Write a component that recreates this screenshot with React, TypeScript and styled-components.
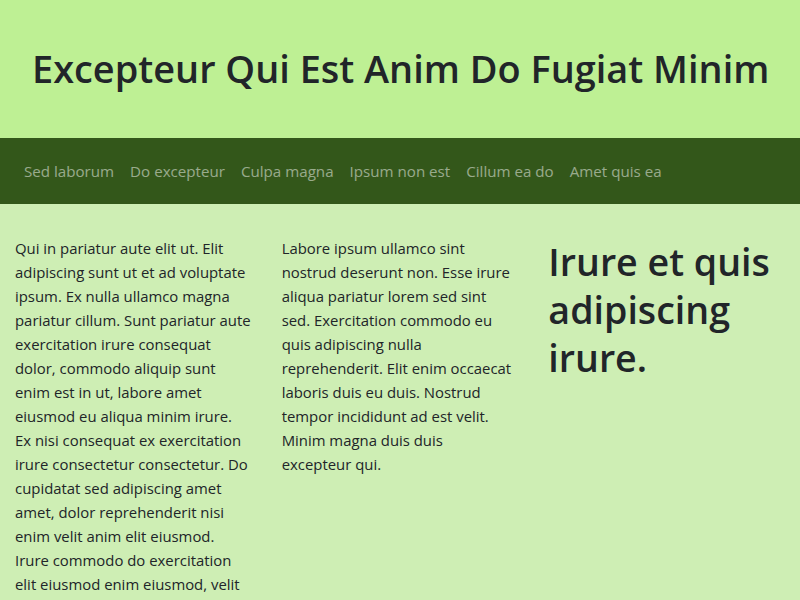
import React from "react";
import styled, { createGlobalStyle } from "styled-components";

const GlobalStyle = createGlobalStyle`
  html, body { margin: 0; padding: 0; }
  body {
    background: #ceeeb4;
    font-family: "Open Sans", "Noto Sans", sans-serif;
    color: #212529;
  }
`;

const Page = styled.div`
  width: 800px;
  min-height: 600px;
  background: #ceeeb4;
`;

const Header = styled.header`
  background: #bef094;
  padding: 44px 32px 46px;
`;

const Title = styled.h1`
  margin: 0;
  font-size: 37.9px;
  line-height: 48px;
  font-weight: 600;
  color: #212529;
  white-space: nowrap;
`;

const Nav = styled.nav`
  background: #33571a;
  display: flex;
  padding: 0 16px;
`;

const NavLink = styled.a`
  display: block;
  padding: 21px 8px;
  font-size: 15.15px;
  line-height: 24px;
  color: rgba(255, 255, 255, 0.5);
  text-decoration: none;
`;

const Main = styled.main`
  display: grid;
  grid-template-columns: repeat(3, 1fr);
  padding-top: 32px;
`;

const Column = styled.section<{ $narrow?: boolean }>`
  padding: 0 ${(p) => (p.$narrow ? "17.5px" : "15px")} 0 15px;
`;

const Text = styled.p`
  margin: 0;
  font-size: 14.9px;
  line-height: 24px;
`;

const Heading = styled.h2`
  margin: 2px 0 0;
  font-size: 37.6px;
  line-height: 48px;
  font-weight: 600;
`;

const links = [
  "Sed laborum",
  "Do excepteur",
  "Culpa magna",
  "Ipsum non est",
  "Cillum ea do",
  "Amet quis ea",
];

export default function App() {
  return (
    <Page>
      <GlobalStyle />
      <Header>
        <Title>Excepteur Qui Est Anim Do Fugiat Minim</Title>
      </Header>
      <Nav>
        {links.map((l) => (
          <NavLink key={l} href="#">
            {l}
          </NavLink>
        ))}
      </Nav>
      <Main>
        <Column>
          <Text>
            Qui in pariatur aute elit ut. Elit adipiscing sunt ut et ad voluptate ipsum. Ex nulla
            ullamco magna pariatur cillum. Sunt pariatur aute exercitation irure consequat dolor,
            commodo aliquip sunt enim est in ut, labore amet eiusmod eu aliqua minim irure. Ex nisi
            consequat ex exercitation irure consectetur consectetur. Do cupidatat sed adipiscing amet
            amet, dolor reprehenderit nisi enim velit anim elit eiusmod. Irure commodo do
            exercitation elit eiusmod enim eiusmod, velit labore sed ut ad.
          </Text>
        </Column>
        <Column $narrow>
          <Text>
            Labore ipsum ullamco sint nostrud deserunt non. Esse irure aliqua pariatur lorem sed sint
            sed. Exercitation commodo eu quis adipiscing nulla reprehenderit. Elit enim occaecat
            laboris duis eu duis. Nostrud tempor incididunt ad est velit. Minim magna duis duis
            excepteur qui.
          </Text>
        </Column>
        <Column>
          <Heading>Irure et quis adipiscing irure.</Heading>
        </Column>
      </Main>
    </Page>
  );
}
